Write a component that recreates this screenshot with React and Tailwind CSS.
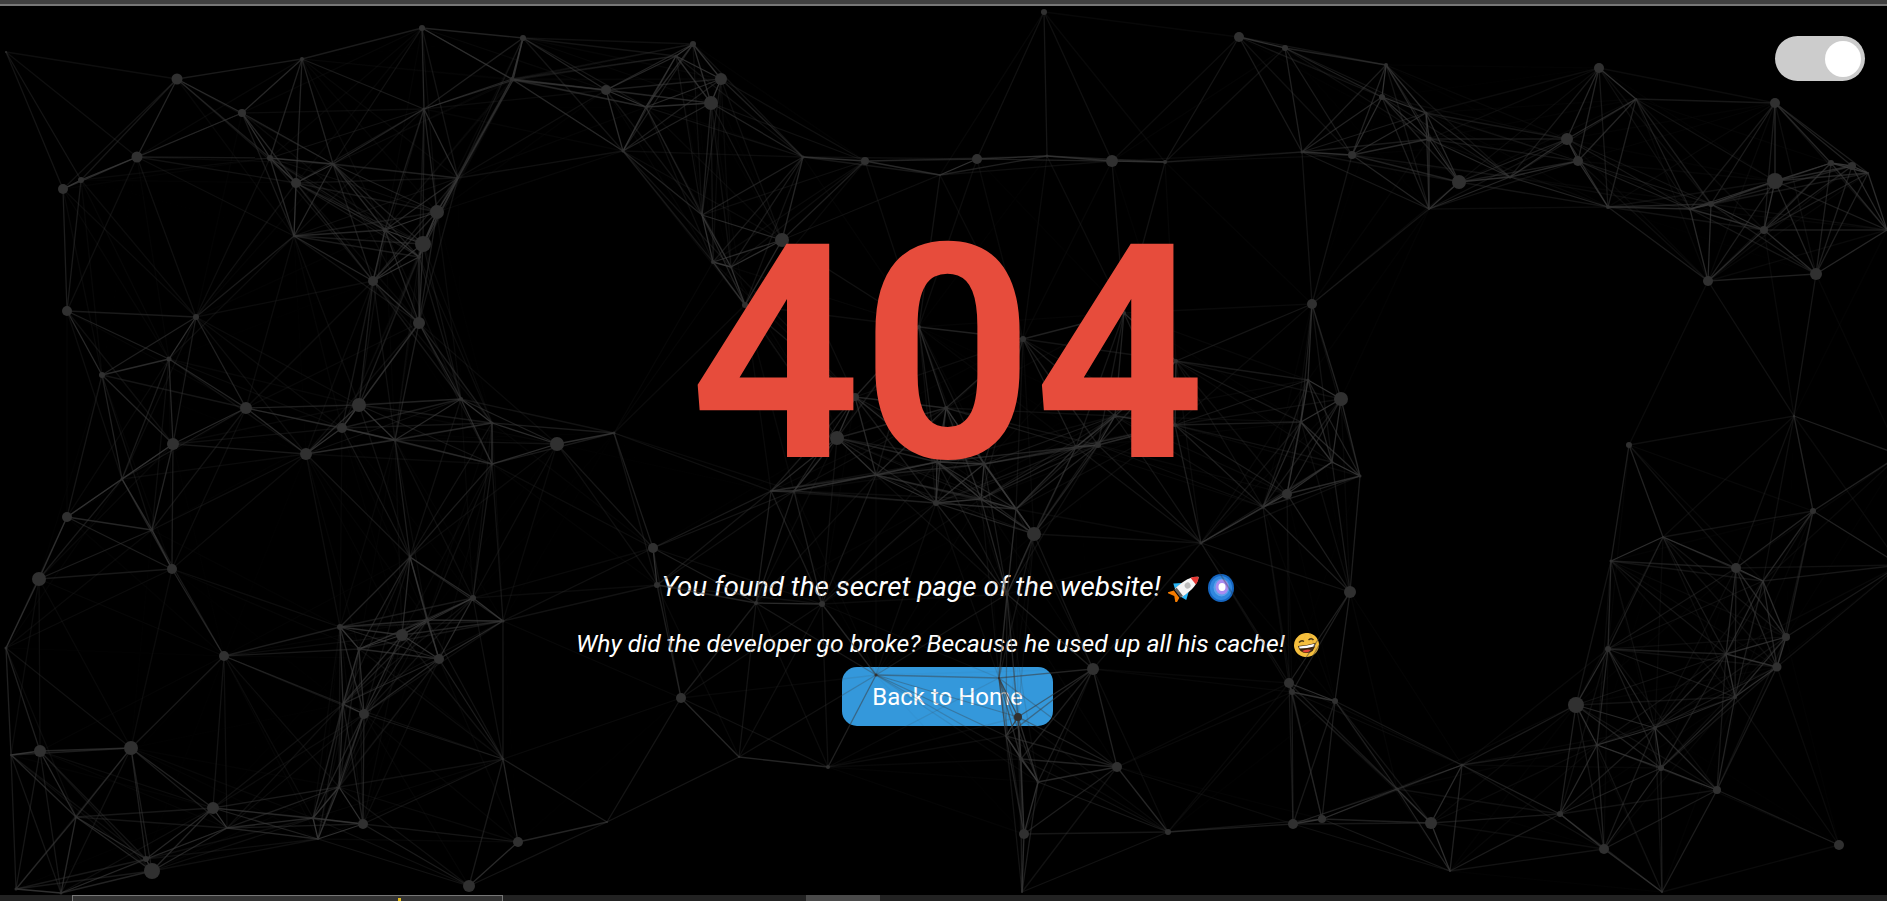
const nodes = [
  [6,52,1],[177,79,5.5],[302,59,2],[422,28,3],[242,113,4],[512,79,2],[137,157,5.5],[81,180,3],[63,189,5],[270,158,3],
  [333,164,1.5],[296,183,5],[424,109,1.5],[458,178,1],[437,212,7],[423,244,8],[385,230,2.5],[294,236,1],[419,257,2],[373,281,5],
  [67,311,5],[196,317,3],[169,359,2.5],[102,375,3],[246,408,6],[359,405,7],[461,399,2],[419,323,6],[173,444,6],[306,454,6],
  [342,428,5],[395,440,1.5],[492,423,1.5],[492,464,1.5],[557,444,7],[614,433,1.5],[122,479,1.5],[67,517,5],[152,530,1.5],[172,569,5],
  [39,579,7],[410,557,1.5],[473,598,3],[6,648,1.5],[224,656,5],[340,627,3],[503,621,1.5],[402,635,6],[359,649,2],[427,620,2],
  [439,659,5],[343,704,1],[364,714,5],[503,759,1],[131,748,7],[40,751,6],[11,755,1],[339,787,1],[213,808,6],[76,817,1.5],
  [227,828,1],[313,818,1.5],[363,824,5],[318,839,1],[518,842,5],[607,822,1],[146,859,3],[152,871,8],[16,889,1.5],[61,893,1.5],
  [469,886,6],[523,38,3],[693,44,3],[676,56,1.5],[513,80,1.5],[606,90,5],[721,79,6],[711,103,7],[646,107,1.5],[623,151,1.5],
  [803,157,1.5],[865,161,4],[940,175,1],[977,159,5],[1047,156,1.5],[1112,161,6],[1165,162,2],[1044,12,3],[702,215,1],[782,240,7],
  [745,305,3],[855,397,4],[837,438,7],[713,262,2],[731,267,1.5],[919,327,2],[946,408,2],[984,464,2],[937,462,1],[1124,313,2],
  [936,503,3],[771,491,1],[794,491,1],[876,475,1],[981,499,1],[653,548,5],[681,698,5],[876,675,1.5],[999,678,1],[822,604,3],
  [756,603,2],[657,585,3],[739,757,1],[828,767,2],[1239,37,5],[1285,48,3],[1386,65,2],[1382,97,3],[1426,113,1.5],[1302,152,1.5],
  [1352,155,4],[1429,139,2.5],[1459,182,7],[1510,177,1.5],[1429,209,1],[1567,139,6],[1578,161,5],[1599,68,5],[1636,99,1],[1775,103,5],
  [1608,207,2],[1690,209,1.5],[1711,204,3],[1775,181,8],[1831,163,3],[1852,166,4],[1868,173,1],[1764,230,4],[1887,230,1],[1708,281,5],
  [1816,274,6],[1312,304,5],[1023,339,3],[1176,361,2],[1308,380,1.5],[1341,399,7],[1301,422,1.5],[1175,425,2],[1115,416,2],[1076,447,2],
  [1098,445,3],[1332,462,1.5],[1360,476,1.5],[1287,494,5],[1263,507,1.5],[1016,509,1.5],[1034,534,7],[1201,543,1.5],[1350,592,6],[1007,594,2],
  [1093,669,6],[1289,683,5],[1292,692,3],[1335,701,3],[1018,717,4],[1006,736,1],[1021,759,2],[1038,782,1.5],[1117,767,5],[1397,789,1.5],
  [1024,834,5],[1168,832,3],[1293,824,5],[1322,819,4],[1022,892,1],[1629,445,3],[1794,416,1],[1813,511,3],[1663,537,1],[1611,561,1.5],
  [1736,568,5],[1763,581,1],[1786,637,4],[1777,667,4.5],[1608,649,3],[1726,654,1.5],[1735,697,2],[1576,705,8],[1655,728,2],[1597,745,1.5],
  [1661,768,3],[1717,790,4],[1462,765,1.5],[1560,814,3],[1431,823,6],[1604,849,5],[1450,871,1],[1839,845,5],[1662,892,1],[1900,455,1],[1900,565,1],
]

const MAX_DIST = 225

const links = []
nodes.forEach((a, i) => {
  nodes.slice(i + 1).forEach((b) => {
    const d = Math.hypot(a[0] - b[0], a[1] - b[1])
    if (d < MAX_DIST) links.push({ a, b, alpha: 1 - d / MAX_DIST })
  })
})

const Network = () => (
  <svg className="absolute inset-0 z-10 pointer-events-none blur-[0.7px]" width="1887" height="901" viewBox="0 0 1887 901">
    {links.map((l, i) => (
      <line key={i} x1={l.a[0]} y1={l.a[1]} x2={l.b[0]} y2={l.b[1]} stroke="#3c3c3c" strokeOpacity={l.alpha} strokeWidth="1.3" />
    ))}
    {nodes.map((n, i) => (
      <circle key={i} cx={n[0]} cy={n[1]} r={n[2]} fill="#303030" />
    ))}
  </svg>
)

const Rocket = () => (
  <svg className="inline-block align-[-6px] w-[33px] h-[28px]" viewBox="0 0 33 28">
    <g transform="rotate(52 16.5 14)">
      <path d="M12 22 L9 29 L16.5 25 L24 29 L21 22 Z" fill="#f57c00" transform="translate(0 2)" />
      <path d="M11 13 L6 20 L11 22 Z" fill="#29b6f6" />
      <path d="M22 13 L27 20 L22 22 Z" fill="#29b6f6" />
      <path d="M16.5 -4 C21 1 23 8 22 22 L11 22 C10 8 12 1 16.5 -4 Z" fill="#f5f5f5" />
      <path d="M16.5 -4 C18.5 -2 20 0 20.8 3 L12.2 3 C13 0 14.5 -2 16.5 -4 Z" fill="#e53935" />
      <circle cx="16.5" cy="10" r="3" fill="#bdbdbd" />
      <rect x="11.5" y="20" width="10" height="3" fill="#616161" />
    </g>
  </svg>
)

const Galaxy = () => (
  <svg className="inline-block align-[-6px] w-[26px] h-[28px] ml-[7px]" viewBox="0 0 26 28">
    <ellipse cx="13" cy="14" rx="13" ry="14" fill="#1565c0" />
    <ellipse cx="13" cy="14" rx="11" ry="12" fill="#2f86de" />
    <ellipse cx="13.5" cy="13.5" rx="8" ry="9" fill="#5aa0ea" />
    <ellipse cx="14" cy="13" rx="6.5" ry="7.5" fill="#a98cf0" />
    <ellipse cx="14" cy="13" rx="3.5" ry="4" fill="#ffffff" />
  </svg>
)

const Grin = () => (
  <svg className="inline-block align-[-5px] w-[25px] h-[24px] ml-[3px]" viewBox="0 0 25 24">
    <ellipse cx="12.5" cy="12" rx="12.5" ry="12" fill="#f6bf3d" transform="rotate(-15 12.5 12)" />
    <path d="M5 9.5 Q7.5 6.5 10 8.5" fill="none" stroke="#4a3410" strokeWidth="1.4" />
    <path d="M14.5 7 Q17.5 4.5 19.5 7" fill="none" stroke="#4a3410" strokeWidth="1.4" />
    <path d="M4 13 Q13 12.5 21.5 10 Q21 20 12 20 Q5.5 20 4 13 Z" fill="#3a2208" />
    <path d="M5 13.4 Q13 13 20.6 10.8 L20.3 13.4 Q13 15.4 5.6 15.4 Z" fill="#ffffff" />
    <path d="M8 18 Q12.5 15.5 17.5 17 Q15 19.4 12 19.4 Q9.5 19.4 8 18 Z" fill="#e0433a" />
  </svg>
)

const App = () => {
  return (
    <div className="relative h-screen w-full overflow-hidden bg-black flex flex-col font-['Roboto',sans-serif] text-white">
      <Network />

      {/* Top strip */}
      <div className="h-[4px] shrink-0 bg-[#404040]" />
      <div className="h-[2px] shrink-0 bg-[#777777]" />

      {/* Toggle */}
      <div className="absolute z-20 top-[36px] right-[22px] w-[90px] h-[45px] rounded-full bg-[#cccccc] flex items-center justify-end pr-[4px]">
        <div className="w-[36px] h-[36px] rounded-full bg-white" />
      </div>

      {/* Content */}
      <div className="flex-1 flex flex-col items-center pl-2 pt-[199px]">
        <h1 className="relative z-20 text-[300px] leading-none font-bold text-[#e74c3c]">404</h1>
        <p className="mt-[66px] text-[27.9px] italic leading-[32px] whitespace-nowrap">You found the secret page of the website! <Rocket /><Galaxy /></p>
        <p className="mt-[26px] text-[24.7px] italic leading-[30px] whitespace-nowrap">Why did the developer go broke? Because he used up all his cache! <Grin /></p>
        <button className="mt-[8px] w-[211px] h-[59px] rounded-[15px] bg-[#3498db] text-[24px] text-white">Back to Home</button>
      </div>

      {/* Bottom strip */}
      <div className="relative z-20 h-[6px] shrink-0 bg-[#222222] flex">
        <div className="ml-[72px] w-[431px] border-x border-t border-[#777777] bg-[#333333] relative">
          <div className="absolute left-[325px] top-[2px] w-[3px] h-[4px] bg-[#e8c020]" />
        </div>
        <div className="ml-[303px] w-[74px] bg-[#4a4a4a]" />
      </div>
    </div>
  )
}

export default App
